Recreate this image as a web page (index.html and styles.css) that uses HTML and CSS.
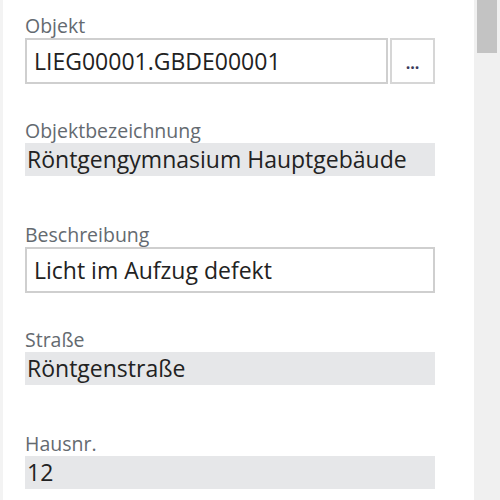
FILE: index.html
```html
<!DOCTYPE html>
<html lang="de">
<head>
<meta charset="utf-8">
<link rel="stylesheet" href="styles.css">
</head>
<body>
<div class="pane">
  <div class="form">
    <div class="field field-edit">
      <div class="label">Objekt</div>
      <div class="row">
        <div class="input">LIEG00001.GBDE00001</div>
        <div class="btn">...</div>
      </div>
    </div>
    <div class="field field-ro">
      <div class="label">Objektbezeichnung</div>
      <div class="ro">Röntgengymnasium Hauptgebäude</div>
    </div>
    <div class="field field-edit">
      <div class="label">Beschreibung</div>
      <div class="input">Licht im Aufzug defekt</div>
    </div>
    <div class="field field-ro">
      <div class="label">Straße</div>
      <div class="ro">Röntgenstraße</div>
    </div>
    <div class="field field-ro">
      <div class="label">Hausnr.</div>
      <div class="ro">12</div>
    </div>
  </div>
  <div class="scrollbar"><div class="thumb"></div></div>
</div>
</body>
</html>
```
FILE: styles.css
```css
html, body {
  margin: 0;
  padding: 0;
  background: #fff;
  width: 500px;
  height: 500px;
  overflow: hidden;
}
.pane {
  display: flex;
  height: 500px;
  border-left: 3px solid #f3f3f3;
  box-sizing: border-box;
}
.form {
  width: 410px;
  margin-left: 22px;
  padding-top: 14px;
  display: flex;
  flex-direction: column;
  font-family: "Open Sans", sans-serif;
}
.field-edit { margin-bottom: 35px; }
.field-ro { margin-bottom: 47px; }
.label {
  height: 24px;
  line-height: 24px;
  font-size: 19.5px;
  color: #646a70;
}
.row {
  display: flex;
  gap: 2px;
}
.input {
  flex: 1;
  height: 46px;
  box-sizing: border-box;
  border: 2px solid #cfcfcf;
  padding: 0 7px;
  line-height: 42px;
  font-size: 23px;
  color: #222;
  background: #fff;
}
.btn {
  width: 45px;
  height: 46px;
  box-sizing: border-box;
  border: 2px solid #d6d6d6;
  text-align: center;
  line-height: 46px;
  font-size: 16px;
  font-weight: bold;
  color: #3a3a5a;
}
.ro {
  height: 33px;
  line-height: 33px;
  background: #e6e7e9;
  padding: 0 2px;
  font-size: 23px;
  color: #222;
}
.scrollbar {
  margin-left: auto;
  width: 26px;
  background: #f0f0f0;
  box-sizing: border-box;
  padding: 0 3px 0 3px;
}
.thumb {
  height: 53px;
  background: #c3c3c3;
}
```
